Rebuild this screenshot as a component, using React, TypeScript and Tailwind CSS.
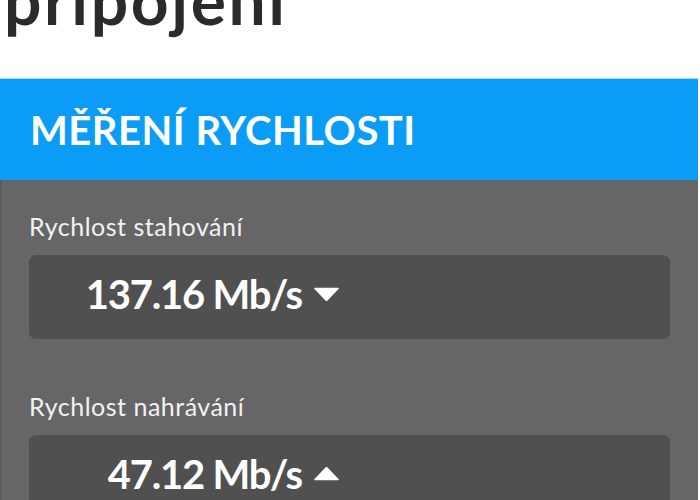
import React from "react";

type Speed = {
  label: string;
  value: string;
  dir: "down" | "up";
};

const speeds: Speed[] = [
  { label: "Rychlost stahování", value: "137.16 Mb/s", dir: "down" },
  { label: "Rychlost nahrávání", value: "47.12 Mb/s", dir: "up" },
];

const Arrow = ({ dir }: { dir: "down" | "up" }) => (
  <svg width="25" height="14" viewBox="0 0 25 14" className="shrink-0">
    {dir === "down" ? (
      <path d="M1 1.5 L24 1.5 L12.5 13.5 Z" fill="#ffffff" strokeLinejoin="round" stroke="#ffffff" strokeWidth="1.5" />
    ) : (
      <path d="M1 12.5 L24 12.5 L12.5 0.5 Z" fill="#ffffff" strokeLinejoin="round" stroke="#ffffff" strokeWidth="1.5" />
    )}
  </svg>
);

const SpeedRow = ({ label, value, dir }: Speed) => (
  <div className="flex flex-col">
    <span className="text-[25px] leading-[28px] tracking-[0.5px] text-[#f2f2f2]">{label}</span>
    <div className="mt-[15px] h-[84px] w-[641px] rounded-[7px] bg-[#505050] flex items-center pb-[6px]">
      <span className="w-[273px] text-right text-[40px] leading-none font-bold tracking-[-1.2px] text-white">
        {value}
      </span>
      <span className="ml-[12px]">
        <Arrow dir={dir} />
      </span>
    </div>
  </div>
);

export default function App() {
  return (
    <div className="w-[700px] h-[500px] overflow-hidden bg-white font-['Lato',sans-serif]">
      <h1 className="mt-[-33px] ml-[4px] text-[66px] leading-[66px] font-bold tracking-[2.6px] text-[#2b2b2b]">
        připojení
      </h1>

      <div className="mt-[45px] w-[698px] border-t border-[#a9dcfb]">
        <div className="h-[101px] bg-[#0b9cf6] flex items-center pl-[30px]">
          <h2 className="text-[40px] leading-none font-bold tracking-[0.5px] text-white">MĚŘENÍ RYCHLOSTI</h2>
        </div>

        <div className="h-[400px] bg-[#666666] border-l-2 border-[#5c5c5c] pl-[27px] pt-[32px] flex flex-col gap-[53px]">
          {speeds.map((s) => (
            <SpeedRow key={s.label} {...s} />
          ))}
        </div>
      </div>
    </div>
  );
}
